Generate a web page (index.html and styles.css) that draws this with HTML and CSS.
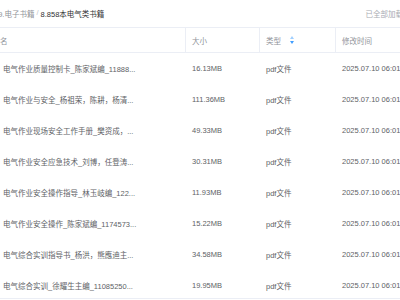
FILE: index.html
```html
<!DOCTYPE html>
<html>
<head>
  <meta charset="UTF-8">
  <meta name="viewport" content="width=device-width, initial-scale=1.0">
  <title>电气类书籍</title>
  <link rel="stylesheet" href="styles.css">
</head>
<body>

<div class="page">
  <div class="topbar">
    <div class="crumbs">
      <span class="crumb">09.电子书籍</span>
      <span class="sep">/</span>
      <span class="crumb current">8.858本电气类书籍</span>
    </div>
    <div class="status">已全部加载</div>
  </div>

  <div class="table">
    <div class="row head">
      <div class="cell">文件名</div>
      <div class="cell">大小</div>
      <div class="cell">类型
        <svg class="sort" width="4" height="8" viewBox="0 0 4 8">
          <path d="M2 0 L4 3 L0 3 Z" fill="#a0cfff"/>
          <path d="M0 5 L4 5 L2 8 Z" fill="#409eff"/>
        </svg>
      </div>
      <div class="cell">修改时间</div>
    </div>

    <div class="body" id="rows"></div>
  </div>
</div>

<script>
  const files = [
    ['电气作业质量控制卡_陈家斌编_11888...', '16.13MB'],
    ['电气作业与安全_杨祖荣，陈耕，杨清...', '111.36MB'],
    ['电气作业现场安全工作手册_樊资成，...', '49.33MB'],
    ['电气作业安全应急技术_刘博，任登涛...', '30.31MB'],
    ['电气作业安全操作指导_林玉岐编_122...', '11.93MB'],
    ['电气作业安全操作_陈家斌编_1174573...', '15.22MB'],
    ['电气综合实训指导书_杨洪，熊應迪主...', '34.58MB'],
    ['电气综合实训_徐耀生主编_11085250...', '19.95MB']
  ];

  const rowsEl = document.getElementById('rows');
  files.forEach(f => {
    const row = document.createElement('div');
    row.className = 'row';
    row.innerHTML =
      '<div class="cell name"><span class="icon"></span>' + f[0] + '</div>' +
      '<div class="cell">' + f[1] + '</div>' +
      '<div class="cell">pdf文件</div>' +
      '<div class="cell">2025.07.10 06:01</div>';
    rowsEl.appendChild(row);
  });
</script>

</body>
</html>
```

FILE: styles.css
```css
body {
  margin: 0;
  overflow: hidden;
  background: #fff;
  font-family: 'Liberation Sans', 'Noto Sans CJK SC', sans-serif;
  font-size: 7.5px;
  color: #606266;
}

.page {
  width: 425px;
  margin-left: -22px;
}

.topbar {
  height: 27px;
  display: flex;
  align-items: center;
  justify-content: space-between;
  padding-left: 16px;
}

.crumbs {
  display: flex;
  gap: 2px;
}

.crumb {
  color: #909399;
}

.sep {
  color: #c0c4cc;
}

.crumb.current {
  color: #303133;
}

.status {
  color: #a8abb2;
}

.row {
  display: grid;
  grid-template-columns: 207px 74px 76px 68px;
  height: 31px;
  align-items: center;
}

.cell {
  padding-left: 7px;
  white-space: nowrap;
  overflow: hidden;
  height: 100%;
  display: flex;
  align-items: center;
}

.head {
  height: 26px;
  box-sizing: border-box;
  border-top: 1px solid #ebeef5;
  border-bottom: 1px solid #ebeef5;
  color: #909399;
}

.head .cell + .cell {
  border-left: 1px solid #ebeef5;
  padding-left: 6px;
}

.sort {
  margin-left: 9px;
}

.body {
  height: 245px;
  overflow: hidden;
  border-bottom: 1px solid #ebeef5;
}

.icon {
  width: 12px;
  height: 12px;
  margin-right: 6px;
  background: #f56c6c;
  border-radius: 2px;
  flex-shrink: 0;
}
```
